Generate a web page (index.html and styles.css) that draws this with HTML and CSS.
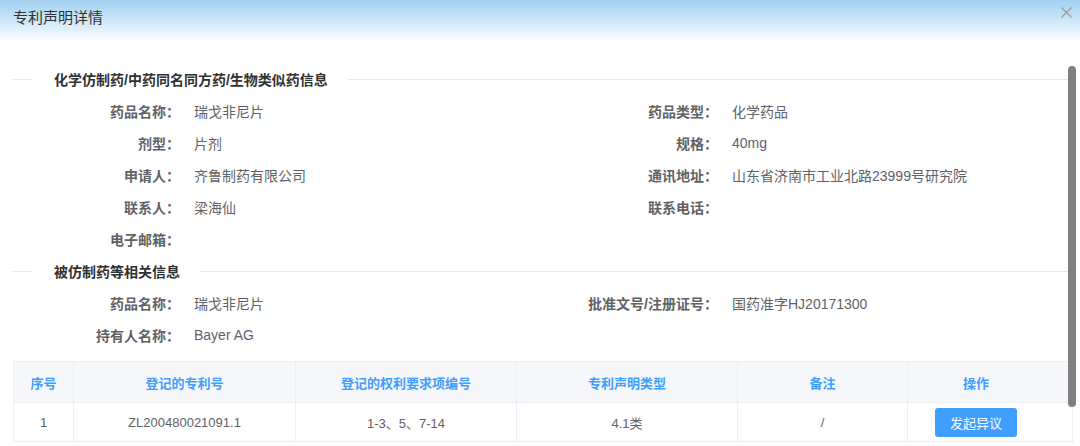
FILE: index.html
```html
<!DOCTYPE html>
<html lang="zh-CN">
<head>
  <meta charset="UTF-8" />
  <meta name="viewport" content="width=device-width, initial-scale=1.0"/>
  <title>专利声明详情</title>
  <link rel="stylesheet" href="styles.css">
</head>
<body>

  <!-- 弹窗 -->
  <div class="dialog">
    <div class="dialog-header">
      <span class="dialog-title">专利声明详情</span>
      <span class="dialog-close">
        <svg width="11" height="11" viewBox="0 0 11 11"><path d="M0.5 0.5L10.5 10.5M10.5 0.5L0.5 10.5" stroke="#9a9a9a" stroke-width="1.2" fill="none"/></svg>
      </span>
    </div>

    <div class="dialog-body">
      <div class="section-title"><span>化学仿制药/中药同名同方药/生物类似药信息</span></div>
      <div class="form-grid">
        <div class="form-item"><label>药品名称：</label><span>瑞戈非尼片</span></div>
        <div class="form-item"><label>药品类型：</label><span>化学药品</span></div>
        <div class="form-item"><label>剂型：</label><span>片剂</span></div>
        <div class="form-item"><label>规格：</label><span>40mg</span></div>
        <div class="form-item"><label>申请人：</label><span>齐鲁制药有限公司</span></div>
        <div class="form-item"><label>通讯地址：</label><span>山东省济南市工业北路23999号研究院</span></div>
        <div class="form-item"><label>联系人：</label><span>梁海仙</span></div>
        <div class="form-item"><label>联系电话：</label><span></span></div>
        <div class="form-item"><label>电子邮箱：</label><span></span></div>
      </div>

      <div class="section-title"><span>被仿制药等相关信息</span></div>
      <div class="form-grid">
        <div class="form-item"><label>药品名称：</label><span>瑞戈非尼片</span></div>
        <div class="form-item"><label>批准文号/注册证号：</label><span>国药准字HJ20171300</span></div>
        <div class="form-item"><label>持有人名称：</label><span>Bayer AG</span></div>
      </div>

      <table class="patent-table">
        <thead>
          <tr>
            <th class="col-no">序号</th>
            <th class="col-a">登记的专利号</th>
            <th class="col-c">登记的权利要求项编号</th>
            <th class="col-c">专利声明类型</th>
            <th class="col-b">备注</th>
            <th class="col-op">操作</th>
          </tr>
        </thead>
        <tbody>
          <tr>
            <td>1</td>
            <td>ZL200480021091.1</td>
            <td>1-3、5、7-14</td>
            <td>4.1类</td>
            <td>/</td>
            <td class="col-op"><button>发起异议</button></td>
          </tr>
        </tbody>
      </table>
    </div>

    <div class="scrollbar"></div>
  </div>

</body>
</html>
```

FILE: styles.css
```css
/* Genel */
body {
  margin: 0;
  padding: 0;
  background: #fff;
  font-family: "Liberation Sans", "Noto Sans CJK SC", sans-serif;
  color: #606266;
}

.dialog {
  position: relative;
  width: 1080px;
  height: 446px;
  overflow: hidden;
}

/* Header */
.dialog-header {
  height: 42px;
  box-sizing: border-box;
  padding: 8px 13px 0;
  background: linear-gradient(to bottom, #a3d1f0 0%, #d2e9f8 55%, #fff 100%);
  display: flex;
  justify-content: space-between;
}
.dialog-title {
  font-size: 15px;
  line-height: 20px;
  color: #333;
}
.dialog-close {
  margin-top: -1px;
  margin-right: -5px;
  line-height: 0;
}

/* Body */
.dialog-body {
  padding: 21px 5px 0 13px;
}

.section-title {
  display: flex;
  align-items: center;
  height: 32px;
  font-size: 14px;
  font-weight: bold;
  color: #303133;
}
.section-title::before {
  content: "";
  width: 20px;
  border-top: 1px solid #e4e7ed;
  margin-right: 21px;
}
.section-title::after {
  content: "";
  flex: 1;
  border-top: 1px solid #e4e7ed;
  margin-left: 20px;
}

.form-grid {
  display: grid;
  grid-template-columns: 525px 1fr;
  margin-left: -13px;
}
.form-item {
  display: flex;
  height: 32px;
  align-items: center;
  font-size: 14px;
}
.form-item:nth-child(even) {
  margin-left: 13px;
}
.form-item label {
  width: 180px;
  text-align: right;
  font-weight: bold;
  color: #606266;
  margin-right: 14px;
  white-space: nowrap;
}

/* Tablo */
.patent-table {
  margin-top: 10px;
  width: 1060px;
  border-collapse: collapse;
  table-layout: fixed;
  font-size: 13px;
}
.patent-table th,
.patent-table td {
  border: 1px solid #ebeef5;
  text-align: center;
  padding: 0;
}
.patent-table th {
  height: 40px;
  background: #f5f7fa;
  color: #409eff;
  font-weight: bold;
}
.patent-table td {
  height: 38px;
  color: #606266;
}
.col-no { width: 59px; }
.col-a { width: 221px; }
.col-c { width: 220px; }
.col-b { width: 169px; }
.patent-table .col-op {
  padding-right: 28px;
}
.patent-table button {
  width: 82px;
  height: 29px;
  border: none;
  border-radius: 3px;
  background: #409eff;
  color: #fff;
  font-size: 13px;
  font-family: inherit;
  cursor: pointer;
}

/* Scrollbar */
.scrollbar {
  position: absolute;
  left: 1068px;
  top: 66px;
  width: 8px;
  height: 341px;
  border-radius: 4px;
  background: #808080;
}
```
